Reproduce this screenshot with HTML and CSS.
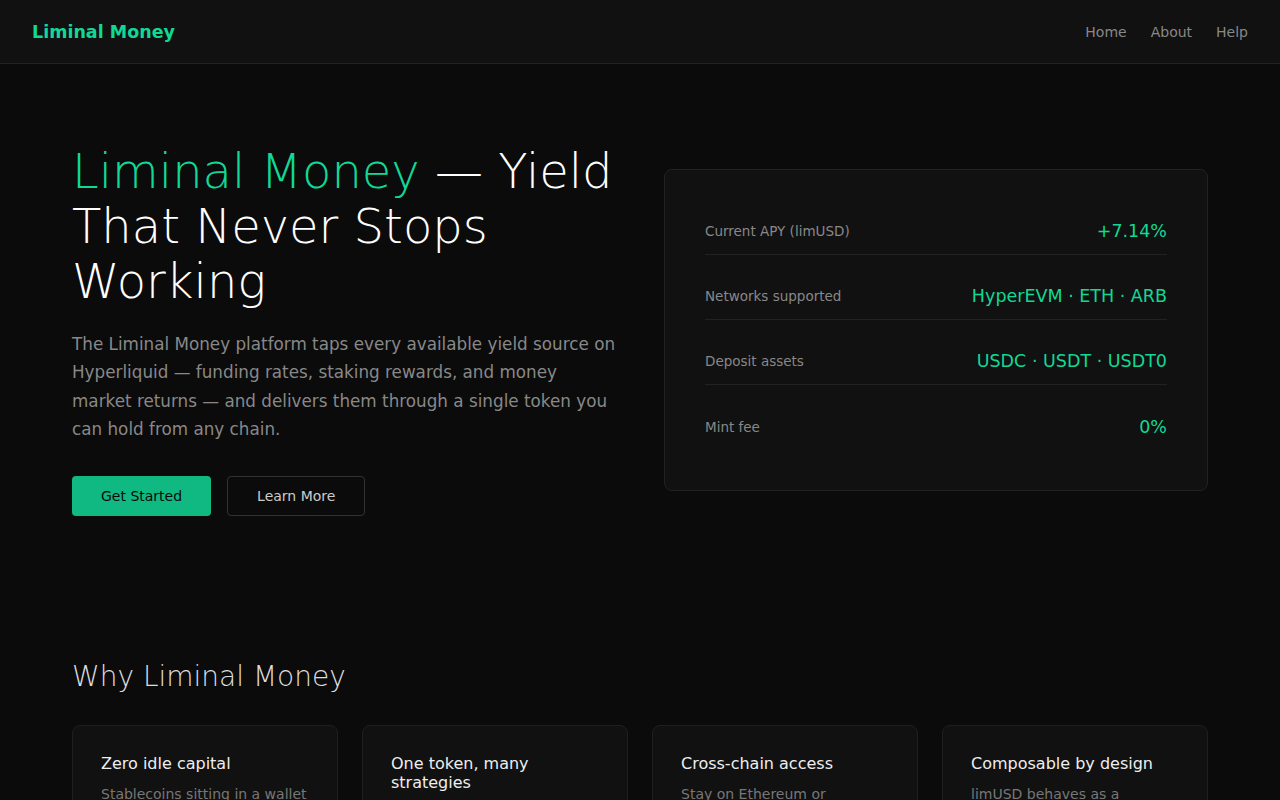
FILE: index.html
```html
<!DOCTYPE html>
<html lang="en">
<head>
    <meta charset="UTF-8">
    <meta name="viewport" content="width=device-width, initial-scale=1.0">
    <title>Liminal Money</title>
    <link rel="stylesheet" href="styles.css">
</head>
<body>
    <header class="topbar">
        <a class="brand" href="#">Liminal Money</a>
        <nav class="nav">
            <a href="#">Home</a>
            <a href="#">About</a>
            <a href="#">Help</a>
        </nav>
    </header>

    <main class="page">
        <section class="hero">
            <div class="hero-copy">
                <h1><span class="accent">Liminal Money</span> — Yield That Never Stops Working</h1>
                <p class="lead">The Liminal Money platform taps every available yield source on Hyperliquid — funding rates, staking rewards, and money market returns — and delivers them through a single token you can hold from any chain.</p>
                <div class="actions">
                    <a class="btn btn-primary" href="#">Get Started</a>
                    <a class="btn btn-ghost" href="#">Learn More</a>
                </div>
            </div>

            <div class="stats-card">
                <div class="stat-row">
                    <span class="stat-label">Current APY (limUSD)</span>
                    <span class="stat-value">+7.14%</span>
                </div>
                <div class="stat-row">
                    <span class="stat-label">Networks supported</span>
                    <span class="stat-value">HyperEVM · ETH · ARB</span>
                </div>
                <div class="stat-row">
                    <span class="stat-label">Deposit assets</span>
                    <span class="stat-value">USDC · USDT · USDT0</span>
                </div>
                <div class="stat-row">
                    <span class="stat-label">Mint fee</span>
                    <span class="stat-value">0%</span>
                </div>
            </div>
        </section>

        <section class="why">
            <h2>Why Liminal Money</h2>
            <div class="features">
                <div class="feature">
                    <h3>Zero idle capital</h3>
                    <p>Stablecoins sitting in a wallet earn nothing. Deposits are routed to work the moment they arrive.</p>
                </div>
                <div class="feature">
                    <h3>One token, many strategies</h3>
                    <p>limUSD bundles funding, staking and lending yield into one balance that grows on its own.</p>
                </div>
                <div class="feature">
                    <h3>Cross-chain access</h3>
                    <p>Stay on Ethereum or Arbitrum and still earn the yield generated on Hyperliquid.</p>
                </div>
                <div class="feature">
                    <h3>Composable by design</h3>
                    <p>limUSD behaves as a standard token, so it plugs into the DeFi tools you already use.</p>
                </div>
            </div>
        </section>
    </main>
</body>
</html>
```

FILE: styles.css
```css
* {
    box-sizing: border-box;
}

body {
    margin: 0;
    background-color: #0b0b0b;
    color: #eee;
    font-family: 'DejaVu Sans', sans-serif;
}

a {
    text-decoration: none;
}

.topbar {
    height: 64px;
    display: flex;
    align-items: center;
    justify-content: space-between;
    padding: 0 32px;
    background-color: #111;
    border-bottom: 1px solid #222;
}

.brand {
    color: #10d996;
    font-size: 17.5px;
    font-weight: bold;
}

.nav {
    display: flex;
    gap: 24px;
}

.nav a {
    color: #888;
    font-size: 14px;
}

.page {
    max-width: 1136px;
    margin: 0 auto;
}

.hero {
    display: grid;
    grid-template-columns: 1fr 544px;
    gap: 40px;
    align-items: center;
    padding: 80px 0;
}

.hero h1 {
    margin: 0 0 20px;
    font-size: 48px;
    font-weight: 200;
    line-height: 1.15;
    color: #fff;
}

.accent {
    color: #10d996;
}

.lead {
    margin: 0 0 32px;
    max-width: 548px;
    font-size: 16.8px;
    line-height: 28.5px;
    color: #888;
}

.actions {
    display: flex;
    gap: 16px;
}

.btn {
    display: inline-flex;
    align-items: center;
    height: 40px;
    padding: 0 28px;
    border: 1px solid transparent;
    border-radius: 4px;
    font-size: 14px;
}

.btn-primary {
    background-color: #10b981;
    color: #0a0a0a;
}

.btn-ghost {
    padding: 0 29px;
    border-color: #333;
    color: #ccc;
}

.stats-card {
    display: flex;
    flex-direction: column;
    gap: 19px;
    padding: 39px 40px 40px;
    background-color: #111;
    border: 1px solid #222;
    border-radius: 8px;
}

.stat-row {
    display: flex;
    align-items: center;
    justify-content: space-between;
    height: 46px;
    border-bottom: 1px solid #222;
}

.stat-row:last-child {
    border-bottom: none;
}

.stat-label {
    font-size: 13.5px;
    color: #888;
}

.stat-value {
    font-size: 17.5px;
    color: #10d996;
}

.why {
    padding: 64px 0 60px;
}

.why h2 {
    margin: 0 0 32px;
    font-size: 28px;
    font-weight: 200;
    color: #ddd;
}

.features {
    display: grid;
    grid-template-columns: repeat(4, 1fr);
    gap: 24px;
}

.feature {
    padding: 28px;
    background-color: #111;
    border: 1px solid #1f1f1f;
    border-radius: 8px;
}

.feature h3 {
    margin: 0 0 10px;
    font-size: 16px;
    font-weight: normal;
    color: #eee;
}

.feature p {
    margin: 0;
    font-size: 14px;
    line-height: 1.6;
    color: #777;
}
```
